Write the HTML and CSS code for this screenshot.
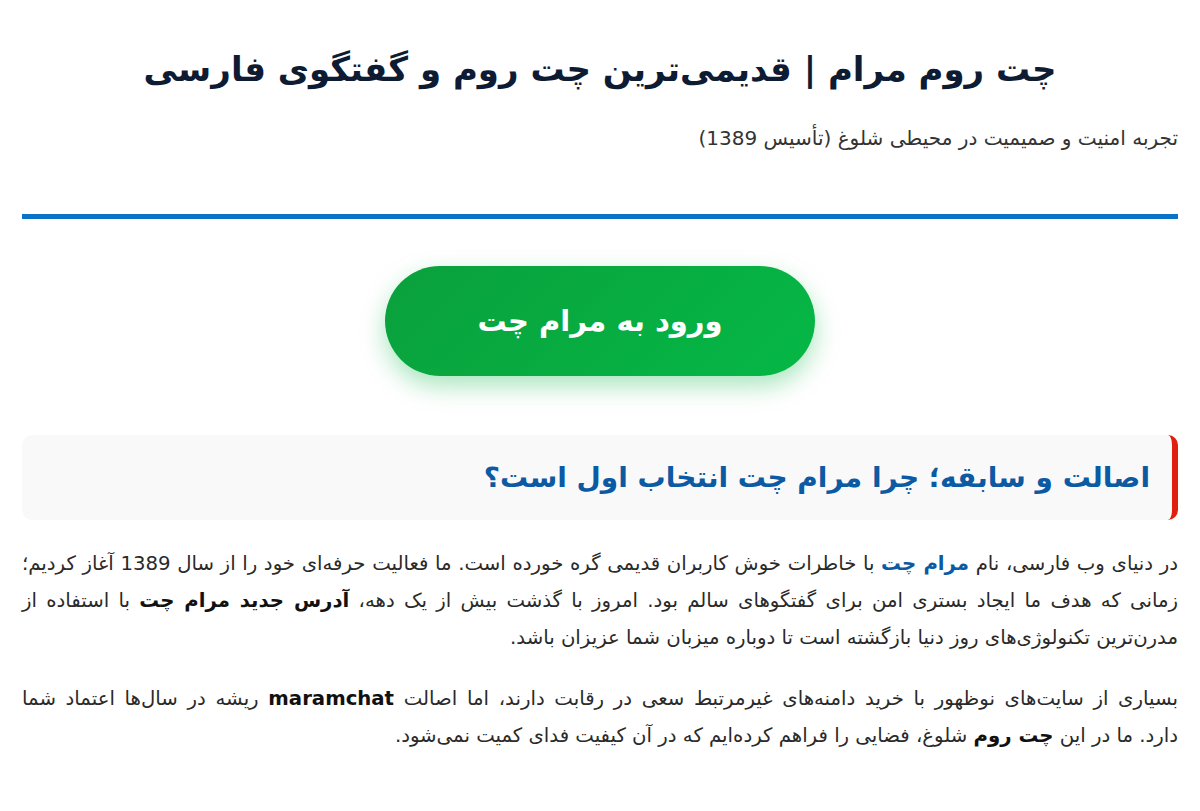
FILE: index.html
```html
<!DOCTYPE html>
<html lang="fa" dir="rtl">
<head>
<meta charset="UTF-8">
<meta name="viewport" content="width=device-width, initial-scale=1.0">
<title>چت روم مرام</title>
<link rel="stylesheet" href="styles.css">
</head>
<body>

<div class="page">
  <header class="site-header">
    <h1 class="site-title">چت روم مرام | قدیمی‌ترین چت روم و گفتگوی فارسی</h1>
    <p class="site-tagline">تجربه امنیت و صمیمیت در محیطی شلوغ (تأسیس 1389)</p>
  </header>

  <div class="enter-wrap">
    <a href="#" class="enter-btn">ورود به مرام چت</a>
  </div>

  <h2 class="section-title">اصالت و سابقه؛ چرا مرام چت انتخاب اول است؟</h2>

  <p class="text">در دنیای وب فارسی، نام <a href="#" class="text-link">مرام چت</a> با خاطرات خوش کاربران قدیمی گره خورده است. ما فعالیت حرفه‌ای خود را از سال 1389 آغاز کردیم؛ زمانی که هدف ما ایجاد بستری امن برای گفتگوهای سالم بود. امروز با گذشت بیش از یک دهه، <strong>آدرس جدید مرام چت</strong> با استفاده از مدرن‌ترین تکنولوژی‌های روز دنیا بازگشته است تا دوباره میزبان شما عزیزان باشد.</p>

  <p class="text">بسیاری از سایت‌های نوظهور با خرید دامنه‌های غیرمرتبط سعی در رقابت دارند، اما اصالت <strong>maramchat</strong> ریشه در سال‌ها اعتماد شما دارد.&nbsp;ما در این <strong>چت روم</strong> شلوغ، فضایی را فراهم کرده‌ایم که در آن کیفیت فدای کمیت نمی‌شود.</p>
</div>

</body>
</html>
```

FILE: styles.css
```css
body {
  margin: 0;
  padding: 0;
  background-color: #fff;
  font-family: Tahoma, "DejaVu Sans", sans-serif;
  color: #222;
}

.page {
  padding: 0 22px;
}

.site-header {
  padding-top: 49px;
  padding-bottom: 64px;
  border-bottom: 5px solid #0a72c6;
}

.site-title {
  margin: 0 0 37px;
  text-align: center;
  font-size: 34px;
  font-weight: bold;
  color: #0d1b33;
}

.site-tagline {
  margin: 0;
  font-size: 20px;
  color: #333;
}

.enter-wrap {
  display: flex;
  justify-content: center;
  padding: 47px 0 59px;
}

.enter-btn {
  display: flex;
  align-items: center;
  justify-content: center;
  width: 430px;
  height: 110px;
  border-radius: 55px;
  background: linear-gradient(135deg, #0aa03c, #05b846);
  box-shadow: 0 10px 24px rgba(10, 180, 70, 0.35);
  color: #fff;
  font-size: 29px;
  font-weight: bold;
  text-decoration: none;
}

.section-title {
  margin: 0 0 25px;
  padding: 26px 22px 26px 0;
  background-color: #f9f9f9;
  border-right: 6px solid #e0200f;
  border-radius: 10px;
  font-size: 28px;
  font-weight: bold;
  color: #0b5aa3;
}

.text {
  margin: 0 0 24px;
  font-size: 19.7px;
  line-height: 37px;
  text-align: justify;
  color: #2a2a2a;
}

.text strong {
  color: #111;
}

.text-link {
  color: #0b5aa3;
  font-weight: bold;
  text-decoration: none;
}
```
